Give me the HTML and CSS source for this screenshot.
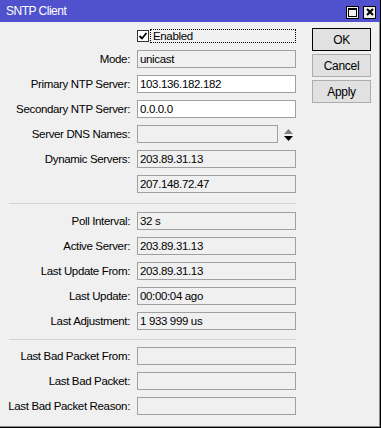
FILE: index.html
```html
<!DOCTYPE html>
<html lang="en">
<head>
    <meta charset="UTF-8">
    <meta name="viewport" content="width=device-width, initial-scale=1.0">
    <title>SNTP Client</title>
    <link rel="stylesheet" href="styles.css">
</head>
<body>
    <div class="window">
        <!-- Title bar -->
        <div class="titlebar">
            <span class="title">SNTP Client</span>
            <div class="wbtns">
                <span class="wbtn"><span class="max-box"></span></span>
                <span class="wbtn">
                    <svg width="8" height="8" viewBox="0 0 8 8"><path d="M1 1 L7 7 M7 1 L1 7" stroke="#000" stroke-width="2"/></svg>
                </span>
            </div>
        </div>

        <div class="content">
            <div class="form">
                <div class="row check-row">
                    <span class="label"></span>
                    <div class="check">
                        <span class="box">
                            <svg width="10" height="10" viewBox="0 0 10 10"><path d="M1.5 5 L4 7.5 L8.5 2" stroke="#000" stroke-width="1.8" fill="none"/></svg>
                        </span>
                        <span class="focus">Enabled</span>
                    </div>
                </div>
                <div class="row"><span class="label">Mode:</span><span class="field">unicast</span></div>
                <div class="row"><span class="label">Primary NTP Server:</span><span class="field edit">103.136.182.182</span></div>
                <div class="row"><span class="label">Secondary NTP Server:</span><span class="field edit">0.0.0.0</span></div>
                <div class="row">
                    <span class="label">Server DNS Names:</span>
                    <div class="spin-wrap">
                        <span class="field short"></span>
                        <svg class="spin" width="9" height="12" viewBox="0 0 9 12"><path d="M4.5 0 L9 5 L0 5 Z" fill="#808080"/><path d="M0 7 L9 7 L4.5 12 Z" fill="#000"/></svg>
                    </div>
                </div>
                <div class="row"><span class="label">Dynamic Servers:</span><span class="field">203.89.31.13</span></div>
                <div class="row"><span class="label"></span><span class="field">207.148.72.47</span></div>

                <div class="sep"></div>

                <div class="row"><span class="label">Poll Interval:</span><span class="field">32 s</span></div>
                <div class="row"><span class="label">Active Server:</span><span class="field">203.89.31.13</span></div>
                <div class="row"><span class="label">Last Update From:</span><span class="field">203.89.31.13</span></div>
                <div class="row"><span class="label">Last Update:</span><span class="field">00:00:04 ago</span></div>
                <div class="row"><span class="label">Last Adjustment:</span><span class="field">1 933 999 us</span></div>

                <div class="sep tight"></div>

                <div class="row"><span class="label">Last Bad Packet From:</span><span class="field"></span></div>
                <div class="row"><span class="label">Last Bad Packet:</span><span class="field"></span></div>
                <div class="row"><span class="label">Last Bad Packet Reason:</span><span class="field"></span></div>
            </div>

            <div class="buttons">
                <button class="btn default">OK</button>
                <button class="btn">Cancel</button>
                <button class="btn">Apply</button>
            </div>
        </div>
    </div>
</body>
</html>
```

FILE: styles.css
```css
* {
    margin: 0;
    padding: 0;
    box-sizing: border-box;
}

body {
    width: 381px;
    height: 428px;
    overflow: hidden;
    background: #f0f0f0;
    font-family: "Liberation Sans", Arial, sans-serif;
    font-size: 11.5px;
    letter-spacing: -0.35px;
    color: #000;
}

.window {
    width: 381px;
    height: 428px;
    background: #f0f0f0;
    border-right: 1px solid #000;
    border-bottom: 1px solid #000;
    box-shadow: inset -1px -1px 0 #8a8a8a;
}

.titlebar {
    height: 22px;
    background: #5051cd;
    display: flex;
    align-items: center;
    justify-content: space-between;
    padding: 0 4px 0 6px;
}

.title {
    color: #fff;
    font-size: 12px;
    letter-spacing: -0.5px;
}

.wbtns {
    display: flex;
    gap: 4px;
    margin-top: 2px;
}

.wbtn {
    width: 13px;
    height: 13px;
    background: #f0f0f0;
    border: 1px solid #000;
    display: flex;
    align-items: center;
    justify-content: center;
}

.max-box {
    width: 9px;
    height: 9px;
    border: 1px solid #000;
    border-top-width: 2px;
}

.content {
    display: flex;
    gap: 16px;
    padding-top: 6px;
}

.form {
    display: flex;
    flex-direction: column;
    gap: 7px;
    width: 296px;
}

.row {
    display: grid;
    grid-template-columns: 130px 159px;
    column-gap: 7px;
    align-items: center;
    height: 18px;
}

.check-row {
    height: 15px;
}

.label {
    text-align: right;
    white-space: nowrap;
}

.field {
    display: block;
    height: 18px;
    line-height: 16px;
    padding: 0 2px;
    border: 1px solid #a0a0a0;
    background: #f0f0f0;
    white-space: nowrap;
    overflow: hidden;
}

.field.edit {
    background: #fff;
}

.field.short {
    width: 141px;
}

.spin-wrap {
    display: flex;
    align-items: center;
    gap: 6px;
}

.spin {
    margin-top: 2px;
}

.check {
    display: flex;
    align-items: center;
    gap: 1px;
}

.box {
    width: 12px;
    height: 12px;
    background: #fff;
    border: 1px solid #333;
    display: flex;
    align-items: center;
    justify-content: center;
}

.focus {
    flex: 1;
    height: 14px;
    line-height: 12px;
    padding-left: 2px;
    border: 1px dotted #000;
}

.sep {
    height: 1px;
    margin: 3px 0 1px 9px;
    background: #d5d5d5;
}

.sep.tight {
    margin: 2px 0 0 9px;
}

.buttons {
    display: flex;
    flex-direction: column;
    gap: 3px;
}

.btn {
    width: 59px;
    height: 23px;
    font-family: inherit;
    font-size: 12px;
    letter-spacing: -0.3px;
    color: #000;
    background: #e1e1e1;
    border: 1px solid #adadad;
}

.btn.default {
    border: 1px solid #000;
    box-shadow: inset 0 0 0 1px #e1e1e1;
}
```
